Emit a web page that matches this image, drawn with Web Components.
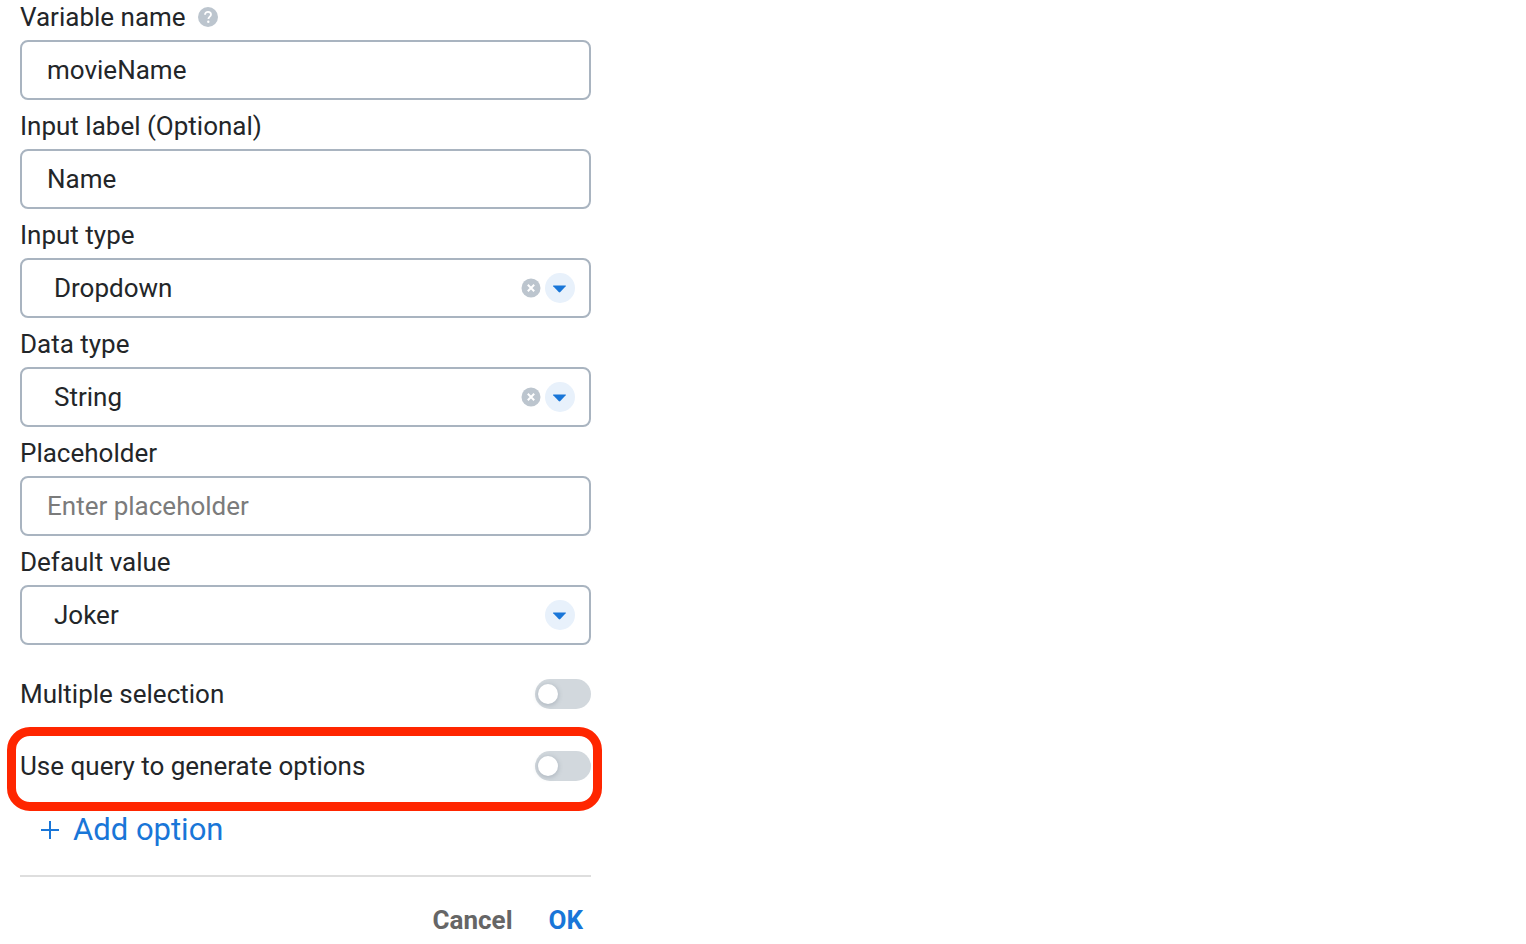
<!DOCTYPE html>
<html lang="en">
<head>
<meta charset="utf-8">
<title>Variable settings</title>
<style>
  body {
    margin: 0;
    background: #fff;
    color: #232629;
    font: 26px/30px Roboto, "Liberation Sans", sans-serif;
    --line: #a9b4c0;
    --accent: #1976d8;
    --muted: #bcc5ce;
  }
</style>
</head>
<body>
<variable-form></variable-form>

<template id="variable-form">
  <style>
    :host { display: block; max-width: 571px; padding: 2px 20px 8px; }
    form { display: flex; flex-direction: column; }
    .fields { display: flex; flex-direction: column; gap: 11px; }
    .toggles { display: flex; flex-direction: column; gap: 42px; margin: 34px 0 31px; }
    .help { width: 20px; height: 20px; }
    hr { width: 100%; height: 2px; margin: 27px 0 28px; border: 0; background: #dedede; }
  </style>
  <form>
    <div class="fields">
      <text-field label="Variable name" value="movieName">
        <svg class="help" slot="hint" viewBox="0 0 20 20" role="img" aria-label="Help">
          <circle cx="10" cy="10" r="10" fill="#bcc5ce"/>
          <path d="M7 7.8C7 5.9 8.3 4.8 10 4.8s3 1.1 3 2.7c0 2.1-2.6 2.2-2.6 4.5" fill="none" stroke="#fff" stroke-width="1.8"/>
          <circle cx="10.3" cy="14.8" r="1.2" fill="#fff"/>
        </svg>
      </text-field>
      <text-field label="Input label (Optional)" value="Name"></text-field>
      <select-field label="Input type" value="Dropdown" clearable></select-field>
      <select-field label="Data type" value="String" clearable></select-field>
      <text-field label="Placeholder" placeholder="Enter placeholder"></text-field>
      <select-field label="Default value" value="Joker"></select-field>
    </div>
    <div class="toggles">
      <toggle-row label="Multiple selection"></toggle-row>
      <toggle-row label="Use query to generate options" highlighted></toggle-row>
    </div>
    <add-button>Add option</add-button>
    <hr>
    <form-actions></form-actions>
  </form>
</template>

<template id="text-field">
  <style>
    :host { display: flex; flex-direction: column; gap: 8px; }
    .head { display: flex; align-items: center; gap: 12px; }
    input {
      box-sizing: border-box; width: 100%; height: 60px; margin: 0; padding: 0 25px;
      border: 2px solid var(--line); border-radius: 8px; background: #fff;
      color: inherit; font: inherit; outline-color: var(--accent);
    }
    input::placeholder { color: #7b7b7b; opacity: 1; }
  </style>
  <div class="head"><label for="control"></label><slot name="hint"></slot></div>
  <input id="control" type="text">
</template>

<template id="select-field">
  <style>
    :host { display: flex; flex-direction: column; gap: 8px; }
    .box { display: grid; grid-template-columns: 1fr auto; align-items: center; }
    select {
      grid-area: 1 / 1 / 2 / 3; box-sizing: border-box; width: 100%; height: 60px; margin: 0;
      padding: 0 84px 0 32px; appearance: none; border: 2px solid var(--line); border-radius: 8px;
      background: #fff; color: inherit; font: inherit; outline-color: var(--accent);
    }
    .tools { grid-area: 1 / 2; display: flex; align-items: center; gap: 4px; padding-right: 16px; pointer-events: none; }
    button { display: flex; padding: 0; border: 0; background: none; pointer-events: auto; cursor: pointer; }
    svg { display: block; }
  </style>
  <label for="control"></label>
  <div class="box">
    <select id="control"></select>
    <div class="tools">
      <button type="button" aria-label="Clear">
        <svg width="20" height="20" viewBox="0 0 20 20"><circle cx="10" cy="10" r="9.5" fill="#bcc5ce"/><path d="M6.8 6.8l6.4 6.4M13.2 6.8l-6.4 6.4" stroke="#fff" stroke-width="2"/></svg>
      </button>
      <svg width="30" height="30" viewBox="0 0 30 30" aria-hidden="true"><circle cx="15" cy="15" r="15" fill="#e8f1fb"/><path d="M8.5 12.500h12q.8 0 .2.7L15.300 19q-.8.8-1.600 0L8.200 13.200q-.5-.7.3-.7z" fill="#1976d8"/></svg>
    </div>
  </div>
</template>

<template id="toggle-row">
  <style>
    :host { display: flex; align-items: center; justify-content: space-between; position: relative; }
    input {
      appearance: none; display: flex; align-items: center; box-sizing: border-box; width: 56px; height: 30px;
      margin: 0; padding: 0 3px; border-radius: 15px; background: #d2d8dd; cursor: pointer;
    }
    input::before {
      content: ""; width: 20px; height: 20px; border-radius: 50%; background: #fff;
      box-shadow: 0 1px 4px 1px rgba(100, 116, 132, .28);
    }
    input:checked { justify-content: flex-end; background: var(--accent); }
    :host([highlighted])::after {
      content: ""; position: absolute; inset: -24px -11px -30px -13px; pointer-events: none;
      border: 9px solid #ff2600; border-radius: 23px;
    }
  </style>
  <label for="control"></label>
  <input id="control" type="checkbox" role="switch">
</template>

<template id="add-button">
  <style>
    :host { display: flex; padding-left: 20px; }
    button {
      display: flex; align-items: center; gap: 13px; padding: 0; border: 0; background: none; cursor: pointer;
      color: var(--accent); font: inherit; font-size: 31px; line-height: 36px;
    }
  </style>
  <button type="button">
    <svg width="20" height="20" viewBox="0 0 20 20" aria-hidden="true"><path d="M1 10h18M10 1v18" stroke="currentColor" stroke-width="2"/></svg>
    <span><slot></slot></span>
  </button>
</template>

<template id="form-actions">
  <style>
    :host { display: flex; justify-content: flex-end; gap: 36px; padding-right: 8px; }
    button { padding: 0; border: 0; background: none; font: inherit; font-weight: 700; color: #666; cursor: pointer; }
    .primary { color: var(--accent); }
  </style>
  <button type="button">Cancel</button>
  <button type="submit" class="primary">OK</button>
</template>

<script>
  class TemplateElement extends HTMLElement {
    constructor() {
      super();
      this.attachShadow({ mode: "open" })
        .append(document.getElementById(this.localName).content.cloneNode(true));
    }
    find(selector) { return this.shadowRoot.querySelector(selector); }
  }

  class LabelledElement extends TemplateElement {
    connectedCallback() {
      this.find("label").textContent = this.getAttribute("label");
    }
  }

  class TextField extends LabelledElement {
    connectedCallback() {
      super.connectedCallback();
      const input = this.find("input");
      input.value = this.getAttribute("value") || "";
      input.placeholder = this.getAttribute("placeholder") || "";
    }
  }

  class SelectField extends LabelledElement {
    connectedCallback() {
      super.connectedCallback();
      const select = this.find("select");
      const value = this.getAttribute("value");
      select.replaceChildren(new Option(value, value, true, true));
      const clear = this.find("button");
      if (this.hasAttribute("clearable")) clear.onclick = () => { select.selectedIndex = -1; };
      else clear.remove();
    }
  }

  customElements.define("text-field", TextField);
  customElements.define("select-field", SelectField);
  customElements.define("toggle-row", class extends LabelledElement {});
  customElements.define("add-button", class extends TemplateElement {});
  customElements.define("form-actions", class extends TemplateElement {});
  customElements.define("variable-form", class extends TemplateElement {});
</script>
</body>
</html>
